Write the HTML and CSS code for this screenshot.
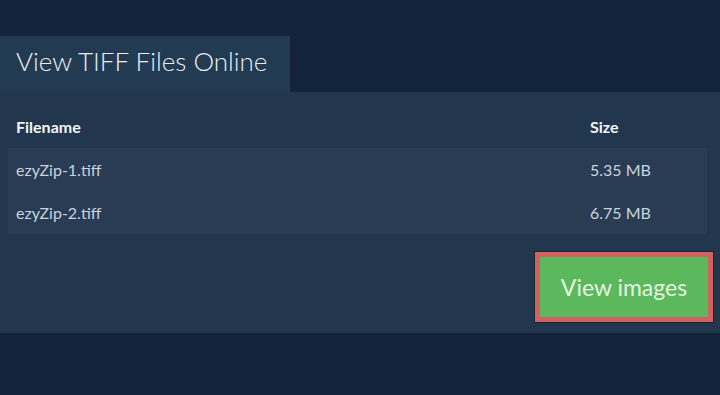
FILE: index.html
```html
<!DOCTYPE html>
<html lang="en">
<head>
    <meta charset="UTF-8">
    <meta name="viewport" content="width=device-width, initial-scale=1.0">
    <title>View TIFF Files Online</title>
    <link rel="stylesheet" href="styles.css">
</head>
<body>
    <div class="viewer">
        <div class="tab">View TIFF Files Online</div>

        <div class="panel">
            <table class="files">
                <thead>
                    <tr>
                        <th class="col-name">Filename</th>
                        <th class="col-size">Size</th>
                    </tr>
                </thead>
                <tbody>
                    <tr>
                        <td>ezyZip-1.tiff</td>
                        <td>5.35 MB</td>
                    </tr>
                    <tr>
                        <td>ezyZip-2.tiff</td>
                        <td>6.75 MB</td>
                    </tr>
                </tbody>
            </table>

            <div class="actions">
                <button class="btn-view">View images</button>
            </div>
        </div>
    </div>
</body>
</html>
```

FILE: styles.css
```css
* {
    margin: 0;
    padding: 0;
    box-sizing: border-box;
}

body {
    font-family: Lato, 'Open Sans', sans-serif;
    background: #13233a;
    min-height: 100vh;
    color: #c9d3de;
}

.viewer {
    padding-top: 36px;
}

.tab {
    display: inline-block;
    width: 290px;
    height: 56px;
    padding-left: 16px;
    line-height: 50px;
    font-size: 26px;
    font-weight: 300;
    color: #e8eef4;
    background: #233a53;
    vertical-align: top;
}

.panel {
    background: #22364d;
    padding: 12px 7px 11px 8px;
}

.files {
    width: calc(100% - 6px);
    border-collapse: collapse;
    font-size: 16px;
}

.files th {
    text-align: left;
    height: 44px;
    padding-left: 8px;
    font-weight: 700;
    color: #f2f5f8;
}

.files .col-size {
    width: 125px;
}

.files tbody tr {
    background: #293c54;
}

.files td {
    height: 43px;
    padding-left: 8px;
    color: #c9d3de;
}

.actions {
    display: flex;
    justify-content: flex-end;
    margin-top: 18px;
}

.btn-view {
    width: 178px;
    height: 70px;
    font-family: Lato, 'Open Sans', sans-serif;
    font-size: 23px;
    font-weight: 400;
    color: #e4f4e2;
    background: #5cb85c;
    border: 5px solid #d1625f;
    outline: 1px solid #1a2535;
    cursor: pointer;
}
```
